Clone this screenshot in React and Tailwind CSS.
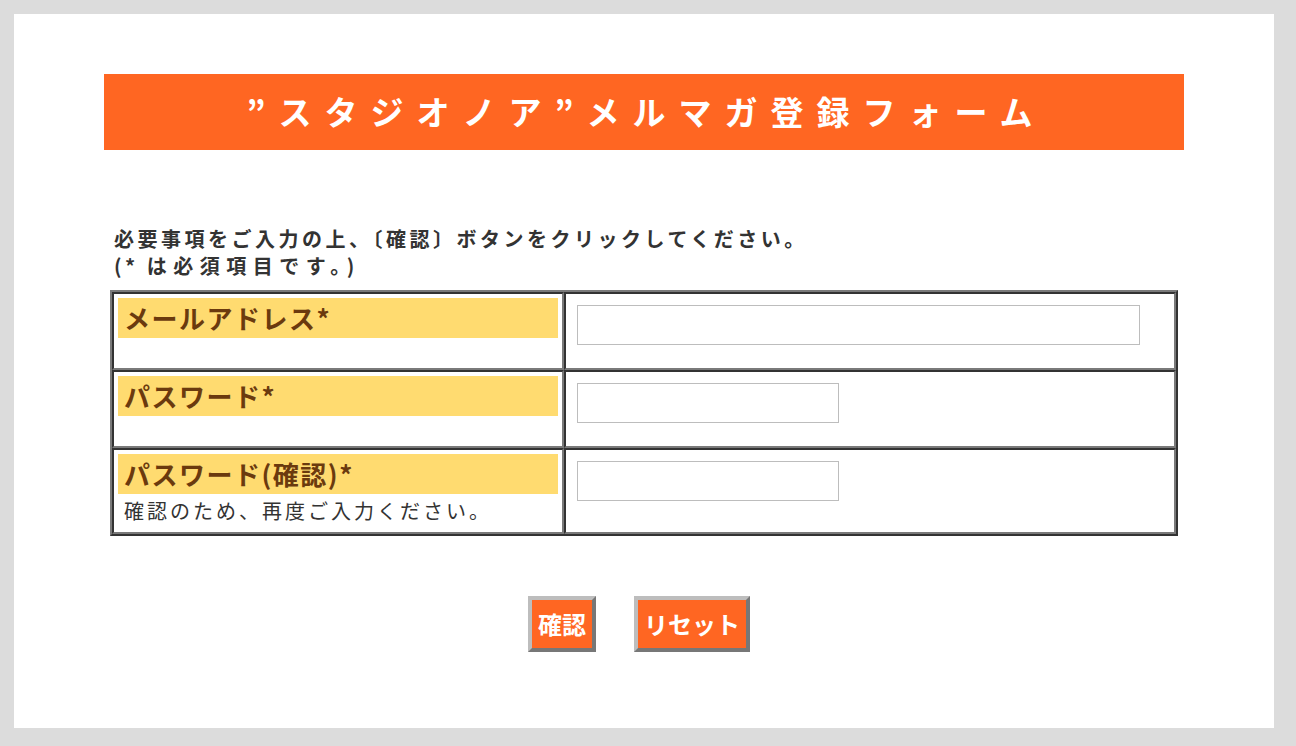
export default function App() {
  const font = { fontFamily: '"Noto Sans CJK JP", "Noto Sans", sans-serif' };
  const cellL =
    "border-2 border-t-[#333] border-l-[#333] border-b-[#7a7a7a] border-r-[#7a7a7a] w-[452px] p-[4px]";
  const cellR =
    "border-2 border-t-[#333] border-l-[#333] border-b-[#7a7a7a] border-r-[#7a7a7a] flex-1 pt-[11px] pl-[11px]";
  const label =
    "h-[40px] bg-[#ffdb70] text-[#6b3a0e] font-bold text-[26px] leading-[40px] pl-[6px] tracking-[1.5px]";
  const input = "block h-[40px] border border-[#bdbdbd] bg-white outline-none";
  const btn =
    "h-[56px] border-4 border-t-[#bdbdbd] border-l-[#bdbdbd] border-b-[#777] border-r-[#777] bg-[#ff6622] text-white font-bold text-[24px] leading-[48px] px-[6px]";
  return (
    <div className="min-h-[746px] bg-[#dcdcdc] p-[14px]" style={font}>
      <div className="bg-white w-[1260px] h-[714px] px-[90px] pt-[60px]">
        <div className="w-[1080px] h-[76px] bg-[#ff6622] flex items-center justify-center text-white font-bold text-[33px] tracking-[13px] pl-[4px]">
          ”スタジオノア”メルマガ登録フォーム
        </div>
        <div className="pt-[75px] pl-[10px] text-[20px] leading-[27px] font-bold text-[#333] tracking-[3.5px]">
          <p>必要事項をご入力の上、〔確認〕ボタンをクリックしてください。</p>
          <p>
            (* <span className="tracking-[6.5px]">は必須項目です。)</span>
          </p>
        </div>
        <div className="mt-[11px] ml-[6px] w-[1068px] border-2 border-t-[#7a7a7a] border-l-[#7a7a7a] border-b-[#333] border-r-[#333]">
          <div className="flex">
            <div className={cellL}>
              <div className="h-[66px]">
                <div className={label}>メールアドレス*</div>
              </div>
            </div>
            <div className={cellR}>
              <input className={input + " w-[563px]"} />
            </div>
          </div>
          <div className="flex">
            <div className={cellL}>
              <div className="h-[66px]">
                <div className={label}>パスワード*</div>
              </div>
            </div>
            <div className={cellR}>
              <input type="password" className={input + " w-[262px]"} />
            </div>
          </div>
          <div className="flex">
            <div className={cellL}>
              <div className="h-[74px]">
                <div className={label}>パスワード(確認)*</div>
                <div className="pl-[6px] pt-[3px] text-[20px] leading-[28px] text-[#333] tracking-[3px]">
                  確認のため、再度ご入力ください。
                </div>
              </div>
            </div>
            <div className={cellR}>
              <input type="password" className={input + " w-[262px]"} />
            </div>
          </div>
        </div>
        <div className="mt-[60px] flex justify-center gap-[38px] pr-[10px]">
          <button className={btn}>確認</button>
          <button className={btn}>リセット</button>
        </div>
      </div>
    </div>
  );
}
